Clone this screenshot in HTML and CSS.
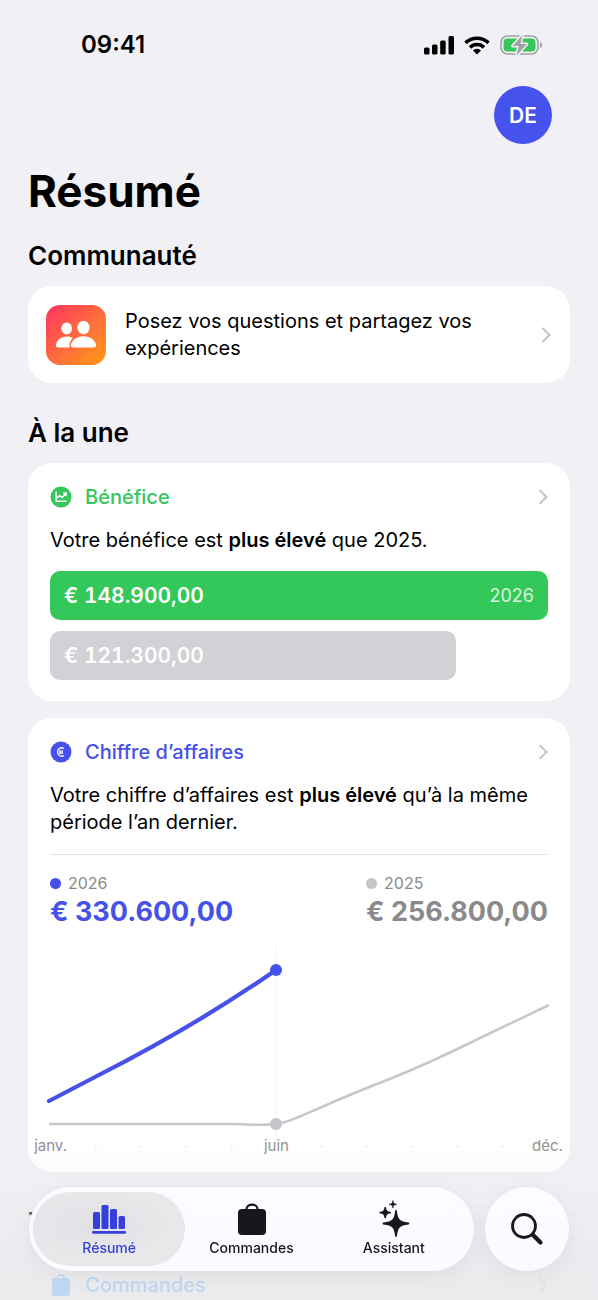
FILE: index.html
```html
<!DOCTYPE html>
<html lang="fr">
<head>
<meta charset="utf-8">
<meta name="viewport" content="width=device-width, initial-scale=1">
<title>Résumé</title>
<link rel="stylesheet" href="styles.css">
</head>
<body>
<div class="statusbar">
  <time class="clock">09:41</time>
  <div class="indicators">
    <svg width="31" height="20" viewBox="0 0 31 20" aria-hidden="true"><rect x="1" y="12.500" width="5.500" height="7" rx="1.500"/><rect x="9" y="9.500" width="5.500" height="10" rx="1.500"/><rect x="17.200" y="5.500" width="5.500" height="14" rx="1.500"/><rect x="25.500" y="1" width="5.500" height="18.500" rx="1.500"/></svg>
    <svg width="26" height="19" viewBox="0 0 26 19" aria-hidden="true"><g fill="none" stroke="#000" stroke-width="3.600"><path d="M1.500 6.900a16.500 16.500 0 0 1 23 0"/><path d="M6 11.400a10 10 0 0 1 14 0"/></g><path d="M9 14.400a6 6 0 0 1 8 0L13 18.500z"/></svg>
    <svg width="43" height="22" viewBox="0 0 43 22" aria-hidden="true"><rect x="1" y="2" width="37" height="18" rx="6.500" fill="none" stroke="#a1a1a6" stroke-width="1.600"/><path d="M40 8v6c2.800-1 2.800-5 0-6z" fill="#a1a1a6"/><rect x="3.500" y="4.500" width="32" height="13" rx="4" fill="#34c759"/><path d="M22.500 1 12.500 12h6.300L16.500 21.500 27 10h-6.500z" fill="#a1a1a6" stroke="#f2f1f6" stroke-width="3" paint-order="stroke" stroke-linejoin="round"/></svg>
  </div>
</div>
<main class="page">
  <button class="avatar" type="button" aria-label="Compte DE">DE</button>
  <h1 class="title">Résumé</h1>

  <section class="section">
    <h2 class="heading">Communauté</h2>
    <a class="card community" href="#communaute">
      <svg class="community-icon" width="60" height="60" viewBox="0 0 60 60" aria-hidden="true">
        <defs><linearGradient id="warm" x1="0" y1="0" x2="1" y2="1"><stop offset="0" stop-color="#ff3560"/><stop offset=".55" stop-color="#ff6f3c"/><stop offset="1" stop-color="#ff9a12"/></linearGradient></defs>
        <rect width="60" height="60" rx="14" fill="url(#warm)"/>
        <g fill="#fff"><ellipse cx="20.700" cy="23.500" rx="5.300" ry="6"/><path d="M12 42.500c-1.300 0-2-.6-2-1.700 0-4.800 4.500-9.300 11-9.300 2.500 0 4.400.6 5.900 1.600-2.400 2-3.900 5-3.100 9.400z"/><ellipse cx="37.500" cy="22.500" rx="6.100" ry="6.800"/><path d="M27.500 42.500c-1.700 0-2.600-.7-2.600-2 0-3.700 4.500-9.200 12.600-9.200s12.600 5.500 12.600 9.200c0 1.300-.9 2-2.600 2z"/></g>
      </svg>
      <span class="community-text">Posez vos questions et partagez vos expériences</span>
      <svg class="chevron" width="10" height="16" viewBox="0 0 10 16" aria-hidden="true"><path d="m1.500 1 7 7-7 7"/></svg>
    </a>
  </section>

  <section class="section spaced">
    <h2 class="heading">À la une</h2>
    <div class="stack">
      <article class="card report">
        <a class="report-head green" href="#benefice">
          <svg width="22" height="22" viewBox="0 0 22 22" aria-hidden="true"><circle cx="11" cy="11" r="10.500" fill="currentColor"/><path d="M6.200 6v9.300h10M7 11.700l3-2 2 2 3.700-4M13.700 7.200l2.600-.2-.3 2.500" fill="none" stroke="#fff" stroke-width="1.500" stroke-linecap="round" stroke-linejoin="round"/></svg>
          <h3 class="report-title">Bénéfice</h3>
          <svg class="chevron" width="10" height="16" viewBox="0 0 10 16" aria-hidden="true"><path d="m1.500 1 7 7-7 7"/></svg>
        </a>
        <p class="report-text">Votre bénéfice est <strong>plus élevé</strong> que 2025.</p>
        <div class="bars">
          <div class="bar current"><span class="bar-amount">€ 148.900,00</span><span class="bar-year">2026</span></div>
          <div class="bar previous" style="width: 81.5%"><span class="bar-amount">€ 121.300,00</span></div>
        </div>
      </article>

      <article class="card report">
        <a class="report-head indigo" href="#chiffre">
          <svg width="22" height="22" viewBox="0 0 22 22" aria-hidden="true"><circle cx="11" cy="11" r="10.500" fill="currentColor"/><path d="M13.800 7.300c-3.600-1.600-6.200.7-6.200 3.700s2.600 5.300 6.200 3.700M9 10.200h4M9 12h4" fill="none" stroke="#fff" stroke-width="1.300"/></svg>
          <h3 class="report-title">Chiffre d’affaires</h3>
          <svg class="chevron" width="10" height="16" viewBox="0 0 10 16" aria-hidden="true"><path d="m1.500 1 7 7-7 7"/></svg>
        </a>
        <p class="report-text">Votre chiffre d’affaires est <strong>plus élevé</strong> qu’à la même période l’an dernier.</p>
        <div class="totals">
          <div><div class="legend indigo"><span>2026</span></div><div class="total indigo">€ 330.600,00</div></div>
          <div><div class="legend gray"><span>2025</span></div><div class="total muted">€ 256.800,00</div></div>
        </div>
        <svg class="chart" viewBox="0 0 498 188" role="img" aria-label="Chiffre d’affaires par mois">
          <path d="M226 0v188" stroke="#f2f2f4"/>
          <path d="M-1 176H180C198 176 212 178 226 176C242 174 262 162 318 139.500C356 125 380 114 400 104.500L499 57" fill="none" stroke="#c7c7c9" stroke-width="2.500"/>
          <path d="M-1 153 46 128.500C110 96 164 65 226 22" fill="none" stroke="#4551e8" stroke-width="4.200" stroke-linecap="round"/>
          <circle cx="226" cy="176" r="6" fill="#c5c5ca"/><circle cx="226" cy="22" r="6" fill="#4551e8"/>
        </svg>
        <div class="months">
          <span>janv.</span><i></i><i></i><i></i><i></i><span>juin</span><i></i><i></i><i></i><i></i><i></i><span>déc.</span>
        </div>
      </article>
    </div>
  </section>

  <section class="section spaced">
    <h2 class="heading">Tendances</h2>
    <article class="upcoming">
      <a class="report-head blue" href="#commandes">
        <svg width="22" height="22" viewBox="0 0 22 22" aria-hidden="true"><rect x="2" y="4" width="18" height="18" rx="3" fill="currentColor"/><path d="M7.500 5V4.500a3.500 3.500 0 0 1 7 0V5" fill="none" stroke="currentColor" stroke-width="1.500"/></svg>
        <h3 class="report-title">Commandes</h3>
        <svg class="chevron" width="10" height="16" viewBox="0 0 10 16" aria-hidden="true"><path d="m1.500 1 7 7-7 7"/></svg>
      </a>
    </article>
  </section>
</main>

<div class="dock">
  <nav class="tabs" aria-label="Navigation">
    <a class="tab active" href="#resume" aria-current="page">
      <svg width="36" height="36" viewBox="0 0 36 36" fill="currentColor" aria-hidden="true"><rect x="2" y="10" width="7" height="17" rx="1.500"/><rect x="10.500" y="3" width="7" height="24" rx="1.500"/><rect x="19" y="7" width="7" height="20" rx="1.500"/><rect x="27.500" y="14" width="6.500" height="13" rx="1.500"/><rect x="1" y="29" width="34" height="2.800" rx="1.400"/></svg>
      <span>Résumé</span>
    </a>
    <a class="tab" href="#commandes">
      <svg width="36" height="36" viewBox="0 0 36 36" fill="currentColor" aria-hidden="true"><rect x="5" y="7" width="28" height="26" rx="4"/><path d="M13.500 8V7.200c0-6 11-6 11 0V8" fill="none" stroke="currentColor" stroke-width="2.200"/></svg>
      <span>Commandes</span>
    </a>
    <a class="tab" href="#assistant">
      <svg width="36" height="36" viewBox="0 0 36 36" fill="currentColor" aria-hidden="true"><path d="M20 9C21 18 23 20.500 32.500 21.500C23 22.500 21 25 20 34C19 25 17 22.500 7.500 21.500C17 20.500 19 18 20 9z" stroke="currentColor" stroke-width="1.800" stroke-linejoin="round"/><path d="M9.200 5c.6 4.100 1.600 5 5.700 5.600-4.100.6-5.100 1.500-5.700 5.600-.6-4.100-1.600-5-5.700-5.600 4.100-.6 5.100-1.500 5.700-5.600z" stroke="currentColor" stroke-width="1.200"/><path d="M16.900-1.500c.4 2.700 1.100 3.400 3.800 3.800-2.700.4-3.400 1.100-3.800 3.800-.4-2.700-1.100-3.400-3.800-3.800 2.700-.4 3.400-1.100 3.800-3.800z" stroke="currentColor" stroke-width=".6"/></svg>
      <span>Assistant</span>
    </a>
  </nav>
  <button class="search" type="button" aria-label="Rechercher">
    <svg width="34" height="34" viewBox="0 0 34 34" fill="none" stroke="currentColor" aria-hidden="true"><circle cx="14" cy="14" r="11.500" stroke-width="2.800"/><path d="m23 23 7.500 7.500" stroke-width="4.200" stroke-linecap="round"/></svg>
  </button>
</div>
</body>
</html>
```
FILE: styles.css
```css
* { box-sizing: border-box; }

body {
  margin: 0;
  background: #f1f0f5;
  color: #000;
  font-family: Inter, "Liberation Sans", sans-serif;
  font-size: 20px;
  line-height: 27px;
}

h1, h2, h3, p { margin: 0; }
a { color: inherit; text-decoration: none; }
button { border: 0; padding: 0; font: inherit; cursor: pointer; }
svg { display: block; flex: none; overflow: visible; }

.statusbar {
  display: flex;
  align-items: center;
  justify-content: space-between;
  padding: 31px 55px 27px 81px;
}
.clock { font-size: 24px; line-height: 28px; font-weight: 600; }
.indicators { display: flex; align-items: center; gap: 10px; }

.page { display: flex; flex-direction: column; padding: 0 28px; }
.avatar {
  align-self: flex-end;
  width: 58px;
  height: 58px;
  margin-right: 18px;
  border-radius: 50%;
  background: #4652ee;
  color: #fff;
  font-size: 21px;
  font-weight: 600;
}
.title { margin-top: 19px; font-size: 44px; line-height: 56px; font-weight: 700; }

.section { display: flex; flex-direction: column; gap: 14px; margin-top: 21px; }
.spaced { margin-top: 34px; }
.heading { font-size: 26px; line-height: 32px; font-weight: 600; }
.stack { display: flex; flex-direction: column; gap: 17px; }
.card { border-radius: 24px; background: #fff; }

.community { display: flex; align-items: center; gap: 19px; padding: 19px 19px 18px 18px; }
.community-text { flex: 1; }
.chevron { margin-left: auto; fill: none; stroke: #c4c4c6; stroke-width: 2px; }

.report { padding: 21px 22px; }
.report:last-child { padding-bottom: 16px; }
.report-head { display: flex; align-items: center; gap: 13px; }
.report-title { font-size: 20px; line-height: 26px; font-weight: 500; }
.report-text { margin-top: 17px; }
.report-text strong { font-weight: 600; }
.green { color: #34c759; }
.indigo { color: #4551e8; }
.blue { color: #0088ff; }
.gray { color: #c5c5ca; }
.muted { color: #8a8a8c; }

.bars { display: flex; flex-direction: column; gap: 11px; margin-top: 17px; }
.bar {
  display: flex;
  align-items: center;
  justify-content: space-between;
  height: 49px;
  padding: 0 14px;
  border-radius: 10px;
  color: #fff;
}
.current { background: #34c759; }
.previous { background: #d1d1d6; }
.bar-amount { font-size: 21px; font-weight: 600; font-variant-numeric: tabular-nums; }
.bar-year { font-size: 18px; opacity: 0.8; }

.totals {
  display: flex;
  justify-content: space-between;
  margin-top: 18px;
  padding-top: 18px;
  border-top: 1px solid #e4e4e7;
}
.legend { display: flex; align-items: center; gap: 7px; font-size: 16px; line-height: 20px; }
.legend::before { content: ""; width: 11px; height: 11px; border-radius: 50%; background: currentColor; }
.legend span { color: #8a8a8c; }
.total { font-size: 27px; line-height: 38px; font-weight: 700; }

.chart { width: 100%; margin-top: 17px; }
.months {
  display: grid;
  grid-template-columns: repeat(12, 1fr);
  justify-items: center;
  align-items: center;
  margin: 0 -22px;
  color: #8f8f92;
  font-size: 15px;
  line-height: 20px;
}
.months i { width: 3px; height: 3px; border-radius: 50%; background: #f4f4f6; }

.upcoming { padding: 20px 22px 0; }

.dock {
  position: fixed;
  right: 0;
  bottom: 0;
  left: 0;
  display: flex;
  gap: 11px;
  padding: 47px 29px 29px;
  background: linear-gradient(rgba(235, 235, 239, 0), rgba(235, 235, 239, 0.3) 36%, rgba(233, 233, 237, 0.82) 80%);
}
.tabs, .search {
  background: rgba(252, 251, 255, 0.95);
  box-shadow: 0 4px 22px rgba(0, 0, 0, 0.06);
  backdrop-filter: blur(10px);
  color: #17171c;
}
.tabs { display: grid; flex: 1; grid-template-columns: repeat(3, 1fr); padding: 5px 9px; border-radius: 42px; }
.tab {
  display: flex;
  flex-direction: column;
  align-items: center;
  justify-content: center;
  gap: 2px;
  height: 74px;
  border-radius: 37px;
  font-size: 14px;
  line-height: 16px;
  font-weight: 500;
}
.active {
  margin: 0 -5px;
  background: radial-gradient(ellipse at 42% 45%, #e1e1e5, #e8e8eb 60%);
  color: #3540dc;
}
.search { display: grid; place-items: center; width: 84px; height: 84px; border-radius: 50%; }
```
